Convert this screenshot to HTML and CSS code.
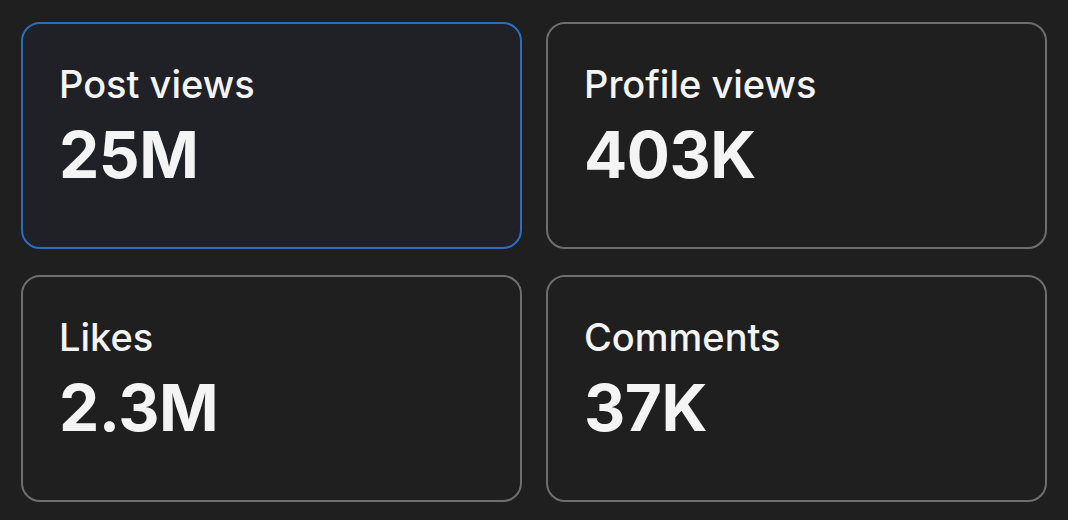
FILE: index.html
```html
<!DOCTYPE html>
<html>
<head>
<meta charset="utf-8">
<link rel="stylesheet" href="styles.css">
</head>
<body>
<div class="grid">
  <div class="card selected">
    <div class="label">Post views</div>
    <div class="value">25M</div>
  </div>
  <div class="card">
    <div class="label">Profile views</div>
    <div class="value">403K</div>
  </div>
  <div class="card">
    <div class="label">Likes</div>
    <div class="value">2.3M</div>
  </div>
  <div class="card">
    <div class="label">Comments</div>
    <div class="value">37K</div>
  </div>
</div>
</body>
</html>
```
FILE: styles.css
```css
html, body {
  margin: 0;
  padding: 0;
  background: #1f1f1f;
}
body {
  font-family: Inter, "Noto Sans", sans-serif;
  color: #f4f4f4;
  width: 1068px;
  height: 520px;
  overflow: hidden;
}
.grid {
  display: grid;
  grid-template-columns: 501px 501px;
  grid-template-rows: 227px 227px;
  column-gap: 24px;
  row-gap: 26px;
  padding: 22px 21px 0 21px;
}
.card {
  box-sizing: border-box;
  border: 2px solid #6e6e6e;
  border-radius: 19px;
  padding: 37px 36px 0 36px;
  background: #1f1f1f;
}
.card.selected {
  border-color: #2a6dc2;
  background: #1f2126;
}
.label {
  font-size: 38px;
  font-weight: 500;
  line-height: 46px;
}
.value {
  font-size: 64px;
  font-weight: 700;
  line-height: 76px;
  letter-spacing: -0.5px;
  margin-top: 10px;
}
```
